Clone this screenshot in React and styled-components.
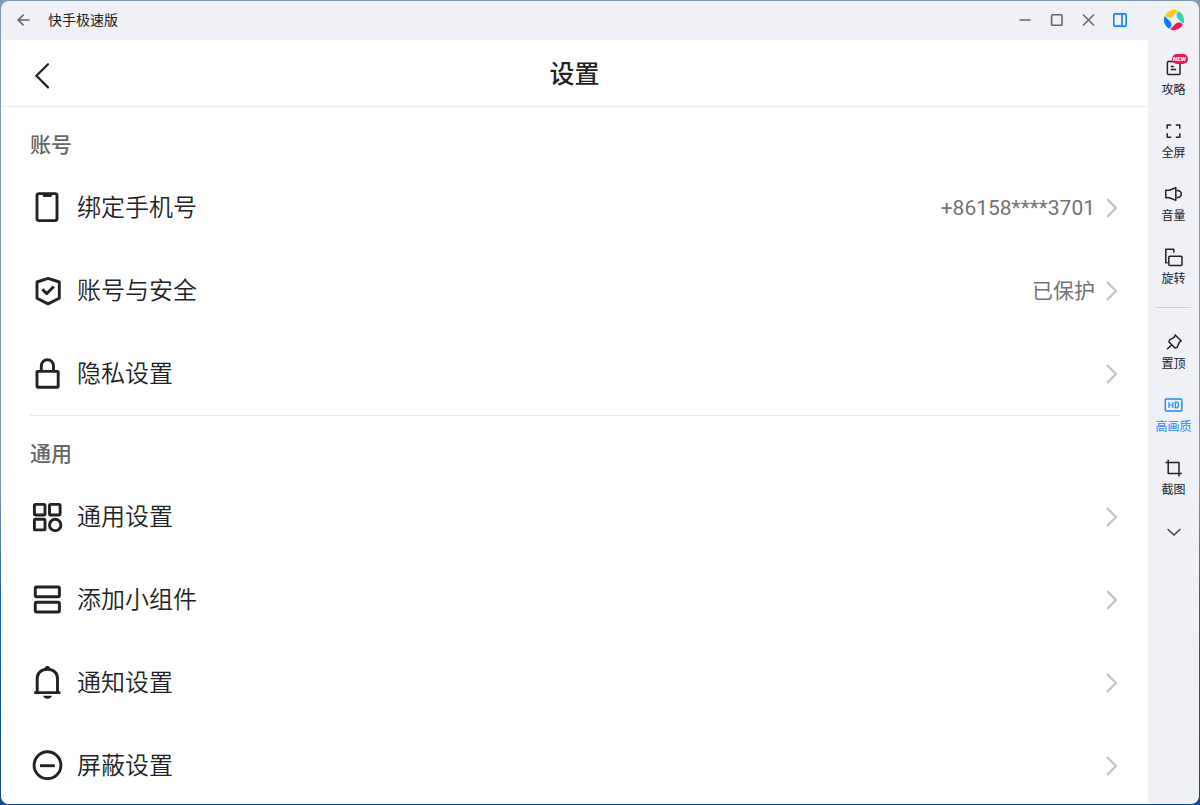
import styled, { createGlobalStyle, css } from 'styled-components';

const GlobalStyle = createGlobalStyle`
  * {
    box-sizing: border-box;
  }
  body {
    margin: 0;
    font-family: Roboto, 'Noto Sans CJK SC', sans-serif;
    color: #222;
  }
  button {
    padding: 0;
    border: 0;
    background: none;
    color: inherit;
    font: inherit;
    cursor: pointer;
  }
  svg {
    display: block;
    flex: none;
  }
`;

const Desktop = styled.div`
  height: 100vh;
  padding: 1px;
  background: linear-gradient(#7f9bb0, #8295a6 60%, #1d5fb4 75%, #12489a);
`;

const Window = styled.div`
  display: flex;
  height: 100%;
  overflow: hidden;
  border-radius: 8px;
  background: #f0f1f7;
`;

const Main = styled.div`
  flex: 1;
  min-width: 0;
  display: flex;
  flex-direction: column;
`;

const TitleBar = styled.header`
  flex: none;
  display: flex;
  align-items: center;
  height: 39px;
  padding: 0 12px 2px 6px;
`;

const WindowTitle = styled.span`
  flex: 1;
  margin-left: 9px;
  font-size: 14px;
  line-height: 20px;
`;

const WindowButton = styled.button`
  display: grid;
  place-items: center;
  width: 32px;
  height: 32px;
  color: ${(props) => (props.$active ? '#0f83ff' : '#666')};
`;

const Screen = styled.main`
  flex: 1;
  min-height: 0;
  overflow: hidden;
  background: #fff;
`;

const PageHeader = styled.div`
  display: grid;
  grid-template-columns: 1fr auto 1fr;
  align-items: center;
  height: 67px;
  padding: 4px 29px 0;
  border-bottom: 1px solid #ececec;
`;

const BackButton = styled.button`
  justify-self: start;
  padding: 4px 0;
`;

const PageTitle = styled.h1`
  margin: 0;
  font-size: 25px;
  line-height: 36px;
  font-weight: 500;
`;

const Section = styled.section`
  margin: 0 29px;
  & + & {
    border-top: 1px solid #e6e6e6;
  }
`;

const SectionTitle = styled.h2`
  margin: 0;
  padding-top: 17px;
  font-size: 21px;
  line-height: 42px;
  font-weight: 500;
  color: #666;
`;

const Row = styled.button`
  display: flex;
  align-items: center;
  width: 100%;
  height: 83px;
  text-align: left;
`;

const RowLabel = styled.span`
  flex: 1;
  margin-left: 12px;
  font-size: 24px;
  line-height: 36px;
  font-weight: 350;
`;

const RowValue = styled.span`
  margin-right: 10px;
  font-size: 21px;
  line-height: 32px;
  color: #737373;
`;

const Sidebar = styled.aside`
  flex: none;
  display: flex;
  flex-direction: column;
  align-items: center;
  width: 51px;
`;

const Logo = styled.div`
  height: 45px;
  padding-top: 8px;
`;

const Tool = styled.button`
  display: flex;
  flex-direction: column;
  align-items: center;
  justify-content: center;
  gap: 4px;
  width: 100%;
  height: 63px;
  font-size: 12px;
  line-height: 16px;
  color: #222226;
  ${(props) =>
    props.$active &&
    css`
      color: #1a88ff;
    `}
`;

const ToolIcon = styled.span`
  position: relative;
`;

const NewBadge = styled.span`
  position: absolute;
  top: -4px;
  left: 8px;
  width: 16px;
  border-radius: 5px;
  background: #ff0a5c;
  color: #fff;
  font-size: 6px;
  line-height: 10px;
  font-weight: 900;
  text-align: center;
`;

const ToolDivider = styled.hr`
  width: 35px;
  height: 1px;
  margin: 9px 0 12px;
  border: 0;
  background: #cfd0d6;
`;

const MoreButton = styled.button`
  display: grid;
  place-items: center;
  width: 100%;
  height: 46px;
  color: #444;
`;

const rowIcons = {
  phone: (
    <>
      <rect x="7" y="3.6" width="20" height="27" rx="2" />
      <path d="M12 4h10.6l-1.4 3h-7.8z" fill="currentColor" stroke="none" />
    </>
  ),
  shield: (
    <>
      <path d="M18 5.4 29.3 9v16.2L18 30.9 7 25.2V9z" />
      <path d="m12.4 16.4 4.4 4.2 7-7.2" />
    </>
  ),
  lock: (
    <>
      <rect x="7" y="15.4" width="21.2" height="15.8" rx="0.6" />
      <path d="M11.3 15V9.8a6.1 6.1 0 0 1 12.2 0V15" />
    </>
  ),
  grid: (
    <>
      <rect x="4.4" y="5.4" width="10.6" height="10.6" rx="1.2" />
      <rect x="19.5" y="5.4" width="10.6" height="10.6" rx="1.2" />
      <rect x="4.4" y="20.3" width="10.6" height="10.6" rx="1.2" />
      <circle cx="25.2" cy="26" r="5.7" />
    </>
  ),
  widget: (
    <>
      <rect x="5.3" y="5" width="24.1" height="9.8" rx="1.2" />
      <rect x="5.3" y="20.2" width="24.1" height="9.8" rx="1.2" />
    </>
  ),
  bell: (
    <>
      <path d="M7.2 27.4V13.2c0-5 4-9 10.2-9s10.1 4 10.1 9v14.2M4.2 27.6h26.2M15.4 3.4l2-1 2 1" />
      <path d="M13 30.8h9c-.8 2-2.4 3-4.5 3s-3.7-1-4.5-3z" fill="currentColor" stroke="none" />
    </>
  ),
  block: (
    <>
      <circle cx="17.5" cy="17.2" r="13.4" />
      <path d="M10 17.7h14.8" />
    </>
  ),
};

const toolIcons = {
  guide: (
    <>
      <rect x="3.4" y="3.6" width="12.6" height="13" rx="1" />
      <path d="M6.8 8.4h3M6.8 11.4h5.4" />
    </>
  ),
  fullscreen: (
    <path d="M3.2 7.8V3.9h4M11.8 3.9h4v3.9M15.8 12.3v3.9h-4M7.2 16.2h-4v-3.9" />
  ),
  volume: (
    <>
      <path d="M1.8 6.2h3.7l6.3-2.6v12.8l-6.3-2.6H1.8z" />
      <path d="M12.4 6.4c6.6-.4 6.6 7.6 0 7.2" />
    </>
  ),
  rotate: (
    <>
      <path d="M3.6 15.8H1.8V2.2h8v3.4" />
      <rect x="4.8" y="9.2" width="13.2" height="9.2" rx="1" />
    </>
  ),
  pin: (
    <path d="M11.2 3 17.2 9l-1.8 1.2-2.3 5.2-2.1.6-6-6 .6-2.1 4.8-2.8zM7.6 13 3 17.2" />
  ),
  hd: (
    <>
      <rect x="1.3" y="4" width="16.6" height="12" rx="1" strokeWidth="1.4" />
      <path
        d="M5 7v6M8.8 7v6M5 10h3.8M11.3 7.2v5.6h1.1c2.8 0 2.8-5.6 0-5.6z"
        strokeWidth="1.2"
      />
    </>
  ),
  crop: <path d="M1.4 4.5H15v14M4.2 1.8v13.6h13.6" />,
};

const RowIcon = ({ name }) => (
  <svg
    width="35"
    height="35"
    viewBox="0 0 35 35"
    fill="none"
    stroke="currentColor"
    strokeWidth="2.9"
    strokeLinejoin="round"
  >
    {rowIcons[name]}
  </svg>
);

const Chevron = () => (
  <svg width="14" height="22" viewBox="0 0 14 22" fill="none" stroke="#c3c3c3" strokeWidth="2.2">
    <path d="m2 2 9 9-9 9" />
  </svg>
);

const petal = 'M2.2 6.4C4.4 2.2 9.4 0 14 1.2c.6.2.6.8.2 1.2L9.4 7.200C7.400 9 4 8.800 2.200 6.400z';

const petals = [
  { color: '#ffc80a', angle: 0 },
  { color: '#2fd6a8', angle: 90 },
  { color: '#ff0f5b', angle: 180 },
  { color: '#0a7dff', angle: 270 },
];

const sections = [
  {
    title: '账号',
    rows: [
      { icon: 'phone', label: '绑定手机号', value: '+86158****3701' },
      { icon: 'shield', label: '账号与安全', value: '已保护' },
      { icon: 'lock', label: '隐私设置' },
    ],
  },
  {
    title: '通用',
    rows: [
      { icon: 'grid', label: '通用设置' },
      { icon: 'widget', label: '添加小组件' },
      { icon: 'bell', label: '通知设置' },
      { icon: 'block', label: '屏蔽设置' },
    ],
  },
];

const windowTools = [
  { icon: 'guide', label: '攻略', badge: 'NEW' },
  { icon: 'fullscreen', label: '全屏' },
  { icon: 'volume', label: '音量' },
  { icon: 'rotate', label: '旋转' },
];

const screenTools = [
  { icon: 'pin', label: '置顶' },
  { icon: 'hd', label: '高画质', active: true },
  { icon: 'crop', label: '截图' },
];

const ToolButton = ({ icon, label, badge, active }) => (
  <Tool type="button" $active={active}>
    <ToolIcon>
      <svg
        width="20"
        height="20"
        viewBox="0 0 20 20"
        fill="none"
        stroke="currentColor"
        strokeWidth="1.5"
        strokeLinejoin="round"
      >
        {toolIcons[icon]}
      </svg>
      {badge && <NewBadge>{badge}</NewBadge>}
    </ToolIcon>
    {label}
  </Tool>
);

const WindowBar = () => (
  <TitleBar>
    <WindowButton type="button" aria-label="返回">
      <svg width="14" height="14" viewBox="0 0 14 14" fill="none" stroke="currentColor" strokeWidth="1.6">
        <path d="M13.6 7H2.4M7.6 1.6 2.2 7l5.4 5.4" />
      </svg>
    </WindowButton>
    <WindowTitle>快手极速版</WindowTitle>
    <WindowButton type="button" aria-label="最小化">
      <svg width="14" height="14" viewBox="0 0 14 14" stroke="currentColor" strokeWidth="1.6">
        <path d="M2.5 7h11" />
      </svg>
    </WindowButton>
    <WindowButton type="button" aria-label="最大化">
      <svg width="14" height="14" viewBox="0 0 14 14" fill="none" stroke="currentColor" strokeWidth="1.6">
        <rect x="2.6" y="1.8" width="10.4" height="10.4" rx="0.8" />
      </svg>
    </WindowButton>
    <WindowButton type="button" aria-label="关闭">
      <svg width="14" height="14" viewBox="0 0 14 14" stroke="currentColor" strokeWidth="1.6">
        <path d="m2 1.5 11 11M13 1.5l-11 11" />
      </svg>
    </WindowButton>
    <WindowButton type="button" aria-label="侧边栏" $active>
      <svg width="14" height="14" viewBox="0 0 14 14" fill="none" stroke="currentColor" strokeWidth="1.6">
        <rect x="0.8" y="0.9" width="12.4" height="12.2" rx="1.4" />
        <path d="M9 1v12" />
      </svg>
    </WindowButton>
  </TitleBar>
);

const Settings = () => (
  <Screen>
    <PageHeader>
      <BackButton type="button" aria-label="返回">
        <svg
          width="24"
          height="28"
          viewBox="0 0 24 28"
          fill="none"
          stroke="currentColor"
          strokeWidth="2.2"
          strokeLinecap="round"
        >
          <path d="M18 3.2 6.4 14.8 18 26.4" />
        </svg>
      </BackButton>
      <PageTitle>设置</PageTitle>
    </PageHeader>
    {sections.map(({ title, rows }) => (
      <Section key={title}>
        <SectionTitle>{title}</SectionTitle>
        {rows.map(({ icon, label, value }) => (
          <Row key={label} type="button">
            <RowIcon name={icon} />
            <RowLabel>{label}</RowLabel>
            {value && <RowValue>{value}</RowValue>}
            <Chevron />
          </Row>
        ))}
      </Section>
    ))}
  </Screen>
);

const App = () => {
  return (
    <>
      <GlobalStyle />
      <Desktop>
        <Window>
          <Main>
            <WindowBar />
            <Settings />
          </Main>
          <Sidebar>
            <Logo>
              <svg width="22" height="22" viewBox="0 0 22 22">
                {petals.map(({ color, angle }) => (
                  <path key={color} d={petal} fill={color} transform={`rotate(${angle} 11 11)`} />
                ))}
              </svg>
            </Logo>
            {windowTools.map((tool) => (
              <ToolButton key={tool.label} {...tool} />
            ))}
            <ToolDivider />
            {screenTools.map((tool) => (
              <ToolButton key={tool.label} {...tool} />
            ))}
            <MoreButton type="button" aria-label="更多">
              <svg width="16" height="10" viewBox="0 0 16 10" fill="none" stroke="currentColor" strokeWidth="1.6">
                <path d="m1.6 2 6.4 6 6.4-6" />
              </svg>
            </MoreButton>
          </Sidebar>
        </Window>
      </Desktop>
    </>
  );
};

export default App;
